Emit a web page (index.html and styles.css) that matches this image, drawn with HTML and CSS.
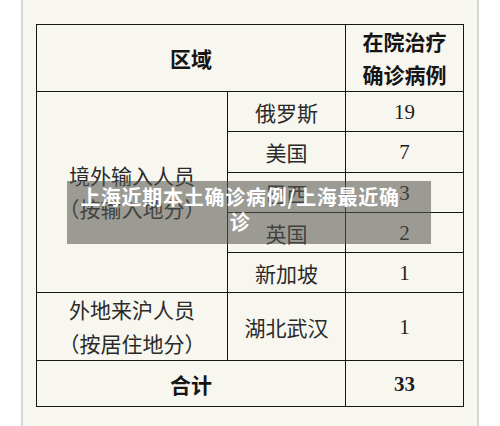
FILE: index.html
```html
<!DOCTYPE html>
<html lang="zh-CN">
<head>
<meta charset="utf-8">
<title>上海近期本土确诊病例</title>
<link rel="stylesheet" href="styles.css">
</head>
<body>
<div class="sheet">
  <table class="stats">
    <colgroup>
      <col class="c-region">
      <col class="c-place">
      <col class="c-count">
    </colgroup>
    <tr class="r-head">
      <th colspan="2">区域</th>
      <th class="two">在院治疗<br>确诊病例</th>
    </tr>
    <tr class="r-a">
      <td rowspan="5" class="group">境外输入人员<br>（按输入地分）</td>
      <td>俄罗斯</td>
      <td class="num">19</td>
    </tr>
    <tr class="r-b">
      <td>美国</td>
      <td class="num">7</td>
    </tr>
    <tr class="r-a">
      <td>巴西</td>
      <td class="num">3</td>
    </tr>
    <tr class="r-a">
      <td>英国</td>
      <td class="num">2</td>
    </tr>
    <tr class="r-a">
      <td>新加坡</td>
      <td class="num">1</td>
    </tr>
    <tr class="r-head">
      <td class="group">外地来沪人员<br>（按居住地分）</td>
      <td>湖北武汉</td>
      <td class="num">1</td>
    </tr>
    <tr class="r-total">
      <th colspan="2">合计</th>
      <td class="num total">33</td>
    </tr>
  </table>
  <div class="caption">上海近期本土确诊病例/上海最近确诊</div>
</div>
</body>
</html>
```

FILE: styles.css
```css
html, body {
  margin: 0;
  padding: 0;
  background: #ffffff;
}

body {
  font-family: "Noto Sans CJK SC", "Noto Sans", sans-serif;
  color: #222222;
}

.sheet {
  position: relative;
  box-sizing: border-box;
  margin-left: 21px;
  width: 458px;
  height: 426px;
  padding-top: 24px;
  padding-left: 13px;
  background: #f8f7ef;
  border-left: 2px solid #d6d6d6;
  border-right: 2px solid #d6d6d6;
  overflow: hidden;
}

.stats {
  border-collapse: collapse;
  table-layout: fixed;
  width: 428px;
}

.c-region { width: 191px; }
.c-place { width: 118px; }
.c-count { width: 118px; }

.stats th,
.stats td {
  border: 1px solid #161616;
  padding: 0;
  text-align: center;
  vertical-align: middle;
  font-size: 21px;
  font-weight: 400;
  line-height: 26px;
  color: #2a2a2a;
}

.stats th {
  font-weight: 700;
  color: #151515;
}

.stats th.two {
  line-height: 33px;
}

.r-head { height: 67px; }
.r-a { height: 40px; }
.r-b { height: 41px; }
.r-total { height: 46px; }

.stats td.group {
  line-height: 33.5px;
}

.stats td.num {
  font-family: "Liberation Serif", "Times New Roman", serif;
  font-size: 21px;
  color: #1c1c1c;
}

.stats td.total {
  font-weight: 700;
}

.caption {
  position: absolute;
  left: 44px;
  top: 181px;
  width: 364px;
  height: 63px;
  box-sizing: border-box;
  padding: 3px 26px 0 8px;
  background: rgba(85, 85, 80, 0.57);
  color: #ffffff;
  font-size: 20px;
  font-weight: 700;
  line-height: 25px;
  letter-spacing: 0.75px;
  text-align: center;
}
```
